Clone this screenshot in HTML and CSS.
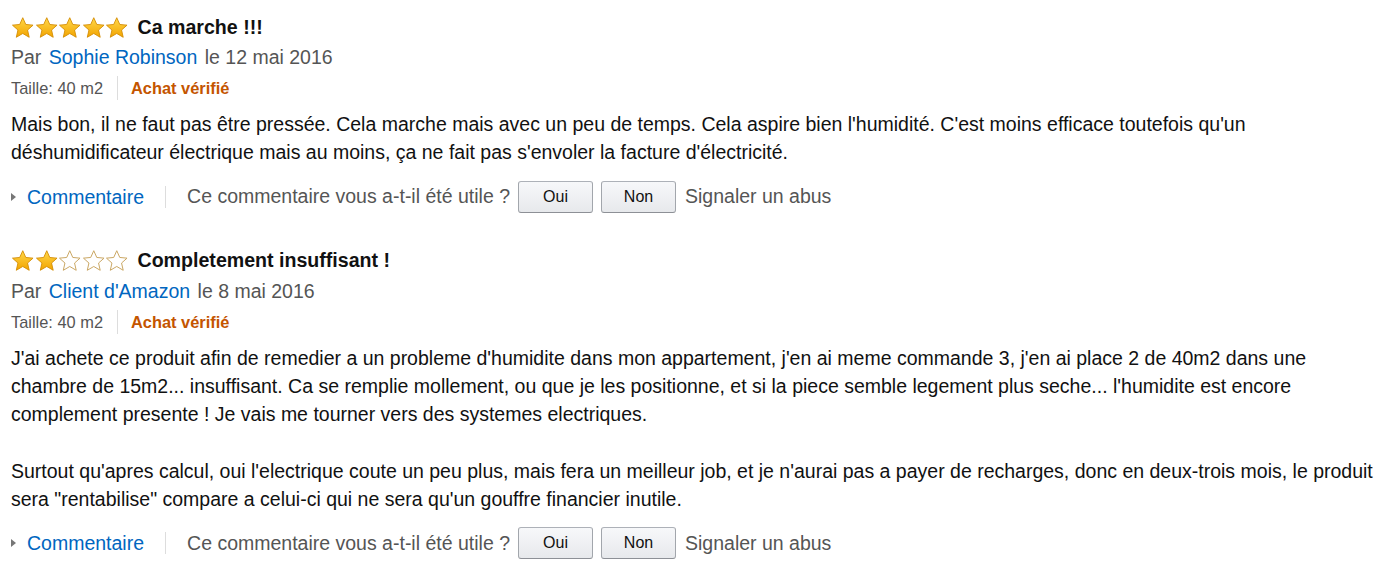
FILE: index.html
```html
<!DOCTYPE html>
<html lang="fr">
<head>
  <meta charset="UTF-8" />
  <title>Commentaires</title>
  <link rel="stylesheet" href="styles.css">
</head>
<body>
  <svg width="0" height="0" class="defs">
    <defs>
      <linearGradient id="gold" x1="0" y1="0" x2="0" y2="1">
        <stop offset="0" stop-color="#ffd84a"/>
        <stop offset="1" stop-color="#f2a400"/>
      </linearGradient>
      <path id="star" d="M12 1.5l3.1 6.9 7.4.7-5.6 5 1.7 7.4L12 17.6l-6.6 3.9 1.7-7.4-5.6-5 7.4-.7z"/>
    </defs>
  </svg>

  <div class="review">
    <div class="review-head">
      <span class="stars">
        <svg class="star full" viewBox="0 0 24 23"><use href="#star"/></svg>
        <svg class="star full" viewBox="0 0 24 23"><use href="#star"/></svg>
        <svg class="star full" viewBox="0 0 24 23"><use href="#star"/></svg>
        <svg class="star full" viewBox="0 0 24 23"><use href="#star"/></svg>
        <svg class="star full" viewBox="0 0 24 23"><use href="#star"/></svg>
      </span>
      <span class="review-title">Ca marche !!!</span>
    </div>
    <div class="byline">Par <a href="#" class="author">Sophie Robinson</a> le 12 mai 2016</div>
    <div class="meta">
      <span class="size">Taille: 40 m2</span>
      <span class="verified">Achat vérifié</span>
    </div>
    <div class="review-text">
      <p>Mais bon, il ne faut pas être pressée. Cela marche mais avec un peu de temps. Cela aspire bien l'humidité. C'est moins efficace toutefois qu'un déshumidificateur électrique mais au moins, ça ne fait pas s'envoler la facture d'électricité.</p>
    </div>
    <div class="actions">
      <a href="#" class="comment-link"><span class="caret"></span>Commentaire</a>
      <span class="helpful">Ce commentaire vous a-t-il été utile ?</span>
      <button class="vote">Oui</button>
      <button class="vote">Non</button>
      <span class="report">Signaler un abus</span>
    </div>
  </div>

  <div class="review">
    <div class="review-head">
      <span class="stars">
        <svg class="star full" viewBox="0 0 24 23"><use href="#star"/></svg>
        <svg class="star full" viewBox="0 0 24 23"><use href="#star"/></svg>
        <svg class="star empty" viewBox="0 0 24 23"><use href="#star"/></svg>
        <svg class="star empty" viewBox="0 0 24 23"><use href="#star"/></svg>
        <svg class="star empty" viewBox="0 0 24 23"><use href="#star"/></svg>
      </span>
      <span class="review-title">Completement insuffisant !</span>
    </div>
    <div class="byline">Par <a href="#" class="author">Client d'Amazon</a> le 8 mai 2016</div>
    <div class="meta">
      <span class="size">Taille: 40 m2</span>
      <span class="verified">Achat vérifié</span>
    </div>
    <div class="review-text">
      <p>J'ai achete ce produit afin de remedier a un probleme d'humidite dans mon appartement, j'en ai meme commande 3, j'en ai place 2 de 40m2 dans une chambre de 15m2... insuffisant. Ca se remplie mollement, ou que je les positionne, et si la piece semble legement plus seche... l'humidite est encore complement presente ! Je vais me tourner vers des systemes electriques.</p>
      <p>Surtout qu'apres calcul, oui l'electrique coute un peu plus, mais fera un meilleur job, et je n'aurai pas a payer de recharges, donc en deux-trois mois, le produit sera "rentabilise" compare a celui-ci qui ne sera qu'un gouffre financier inutile.</p>
    </div>
    <div class="actions">
      <a href="#" class="comment-link"><span class="caret"></span>Commentaire</a>
      <span class="helpful">Ce commentaire vous a-t-il été utile ?</span>
      <button class="vote">Oui</button>
      <button class="vote">Non</button>
      <span class="report">Signaler un abus</span>
    </div>
  </div>
</body>
</html>
```

FILE: styles.css
```css
body {
  margin: 0;
  padding: 14px 11px 0;
  background: #fff;
  color: #111;
  font-family: "Liberation Sans", Arial, sans-serif;
  font-size: 19.5px;
}

.defs {
  position: absolute;
}

.review {
  margin-bottom: 35px;
}

.review-head {
  display: flex;
  align-items: center;
  height: 26px;
}

.stars {
  display: flex;
  margin-right: 9px;
}

.star {
  width: 23.5px;
  height: 23px;
}

.star.full {
  fill: url(#gold);
  stroke: #d38b00;
  stroke-width: 0.9;
}

.star.empty {
  fill: #fff;
  stroke: #c9a560;
  stroke-width: 1;
}

.review-title {
  font-weight: bold;
  font-size: 19.6px;
}

.byline {
  margin-top: 3px;
  color: #555;
  line-height: 28px;
}

.author {
  color: #0066c0;
  text-decoration: none;
  margin: 0 2px;
}

.meta {
  display: flex;
  align-items: center;
  margin-top: 5px;
  font-size: 16.4px;
  line-height: 24px;
}

.size {
  color: #555;
  padding-right: 14px;
  border-right: 1px solid #ddd;
}

.verified {
  color: #c45500;
  font-weight: bold;
  padding-left: 13px;
}

.review-text {
  margin-top: 10px;
  line-height: 28.3px;
}

.review-text p {
  margin: 0 0 28.3px;
}

.review-text p:last-child {
  margin-bottom: 0;
}

.actions {
  display: flex;
  align-items: center;
  margin-top: 14px;
  height: 32px;
  color: #555;
}

.comment-link {
  display: flex;
  align-items: center;
  color: #0066c0;
  text-decoration: none;
  padding-right: 21px;
  border-right: 1px solid #ddd;
  line-height: 22px;
}

.caret {
  width: 0;
  height: 0;
  border-top: 4px solid transparent;
  border-bottom: 4px solid transparent;
  border-left: 5px solid #777;
  margin-right: 11px;
}

.helpful {
  margin-left: 21px;
  margin-right: 8px;
}

.vote {
  width: 75px;
  height: 32px;
  margin-right: 8px;
  padding: 0;
  border: 1px solid #adb1b8;
  border-color: #adb1b8 #a2a6ac #8d9096;
  border-radius: 3px;
  background: linear-gradient(to bottom, #f7f8fa, #e7e9ec);
  color: #111;
  font-family: "Liberation Sans", Arial, sans-serif;
  font-size: 16px;
}

.report {
  margin-left: 1px;
}
```
